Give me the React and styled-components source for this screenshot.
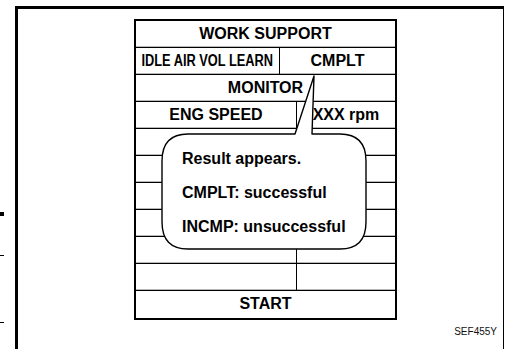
import React from "react";
import styled, { createGlobalStyle } from "styled-components";

const Global = createGlobalStyle`
  html, body {
    margin: 0;
    padding: 0;
    background: #fff;
    overflow: hidden;
  }
  body {
    font-family: "Liberation Sans", Arial, sans-serif;
    color: #000;
  }
`;

const rows = [
  { cells: ["WORK SUPPORT"] },
  { cells: ["IDLE AIR VOL LEARN", "CMPLT"], split: "144px 1fr", narrow: true },
  { cells: ["MONITOR"] },
  { cells: ["ENG SPEED", "XXX rpm"], split: "161px 1fr" },
  { cells: ["", ""], split: "161px 1fr" },
  { cells: ["", ""], split: "161px 1fr" },
  { cells: ["", ""], split: "161px 1fr" },
  { cells: ["", ""], split: "161px 1fr" },
  { cells: ["", ""], split: "161px 1fr" },
  { cells: ["", ""], split: "161px 1fr" },
  { cells: ["START"], last: true },
];

const App = () => {
  return (
    <Page>
      <Global />
      <Margin>
        <Square />
        <Tick $gap={39} />
        <Tick $gap={66} />
      </Margin>
      <Frame>
        <Table>
          {rows.map((r, i) => (
            <Row key={i} $cols={r.split} $last={r.last}>
              {r.cells.map((c, j) => (
                <Cell key={j} $divider={r.split && j === 0}>
                  {r.narrow && j === 0 ? <Narrow>{c}</Narrow> : c}
                </Cell>
              ))}
            </Row>
          ))}
          <Callout>
            <svg width="208" height="178" viewBox="0 0 208 178">
              <path
                d="M151 59 L179 59 Q205 59 205 86 L205 147 Q205 174 179 174 L27 174 Q1 174 1 147 L1 86 Q1 59 27 59 L134 59 L153 1 Z"
                fill="#fff"
                stroke="#000"
                strokeWidth="1.4"
                strokeLinejoin="round"
              />
            </svg>
            <Lines>
              <Line>Result appears.</Line>
              <Line>CMPLT: successful</Line>
              <Line>INCMP: unsuccessful</Line>
            </Lines>
          </Callout>
        </Table>
        <Code>SEF455Y</Code>
      </Frame>
    </Page>
  );
};

const Page = styled.div`
  display: flex;
  width: 505px;
  height: 349px;
  overflow: hidden;
`;

const Margin = styled.div`
  width: 15px;
  padding-top: 212px;
  display: flex;
  flex-direction: column;
  flex-shrink: 0;
`;

const Square = styled.div`
  width: 4px;
  height: 4px;
  background: #000;
`;

const Tick = styled.div`
  width: 4px;
  height: 1px;
  background: #000;
  margin-top: ${(p) => p.$gap}px;
`;

const Frame = styled.div`
  margin-top: 6px;
  width: 485px;
  height: 343px;
  border-top: 3px solid #000;
  border-left: 3px solid #000;
  border-right: 1px solid #000;
  display: flex;
  flex-direction: column;
  align-items: flex-start;
`;

const Table = styled.div`
  position: relative;
  margin: 10px 0 0 116px;
  width: 259px;
  border: 2px solid #000;
  display: flex;
  flex-direction: column;
`;

const Row = styled.div`
  display: grid;
  grid-template-columns: ${(p) => p.$cols || "1fr"};
  height: 27px;
  box-shadow: ${(p) =>
    p.$last ? "none" : "inset 0 -1px 0 #000, inset 0 -2px 0 #b8b8b8"};
`;

const Cell = styled.div`
  display: flex;
  align-items: center;
  justify-content: center;
  font-size: 16px;
  font-weight: bold;
  white-space: nowrap;
  border-right: ${(p) => (p.$divider ? "1px solid #000" : "none")};
  padding-bottom: 1px;
`;

const Narrow = styled.span`
  display: inline-block;
  transform: scaleX(0.8);
`;

const Callout = styled.div`
  position: absolute;
  left: 25px;
  top: 54px;
  width: 208px;
  height: 178px;

  svg {
    position: absolute;
    left: 0;
    top: 0;
  }
`;

const Lines = styled.div`
  position: relative;
  padding: 67px 0 0 21px;
  display: flex;
  flex-direction: column;
`;

const Line = styled.div`
  font-size: 16px;
  font-weight: bold;
  line-height: 34px;
  white-space: nowrap;
`;

const Code = styled.div`
  align-self: flex-end;
  margin: 6px 6px 0 0;
  font-size: 10px;
  line-height: 12px;
  color: #111;
`;

export default App;
